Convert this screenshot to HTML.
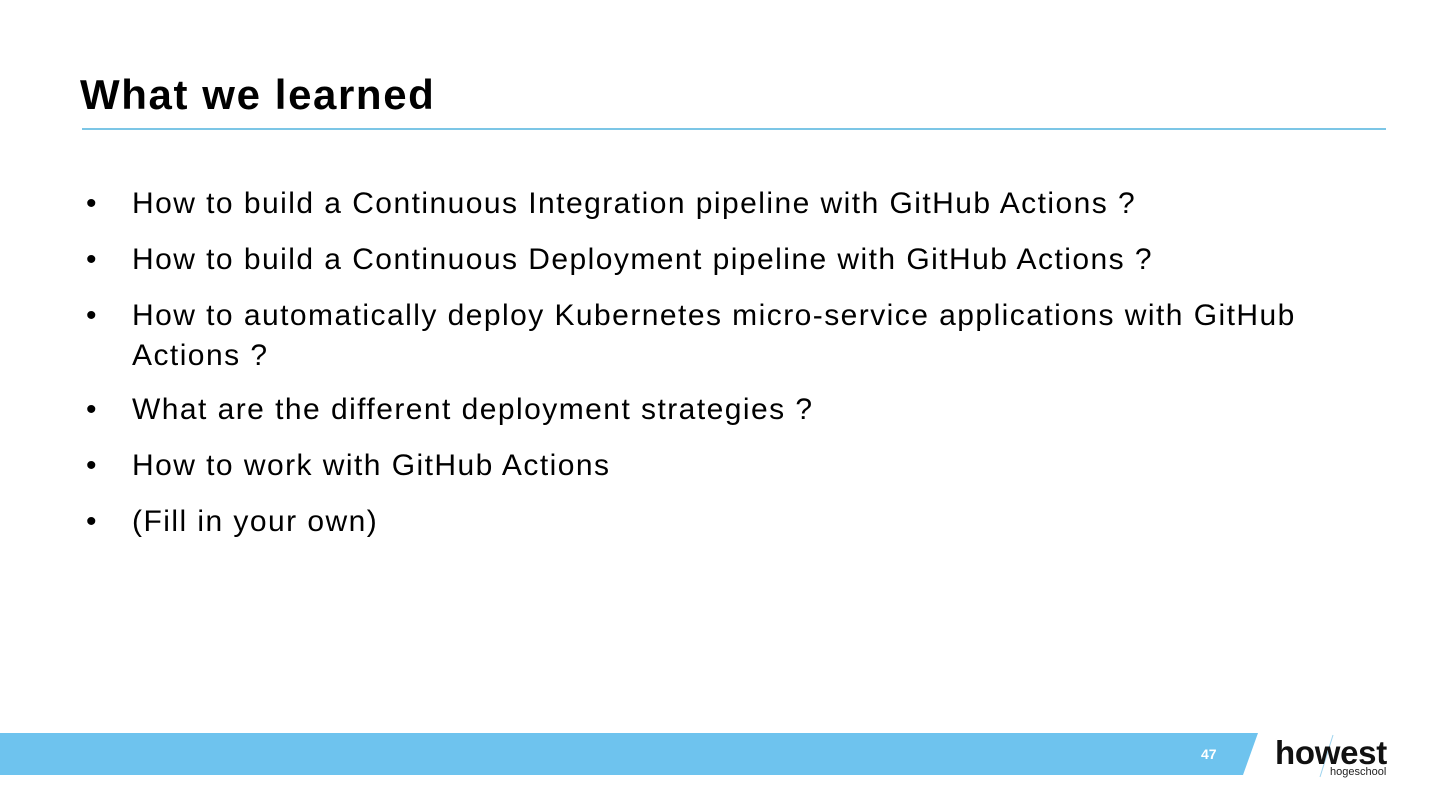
<!DOCTYPE html><html><head><style>
body{margin:0;width:1440px;height:810px;background:#fff;position:relative;overflow:hidden;font-family:"Liberation Sans",sans-serif;}
h1{position:absolute;left:80px;top:70px;margin:0;font-size:42px;font-weight:bold;color:#000;letter-spacing:1.6px;line-height:50px}
.rule{position:absolute;left:82px;top:128px;width:1304px;height:2px;background:#7cc6e6}
.b{position:absolute;left:132px;font-size:30px;color:#000;line-height:40px;width:1250px;letter-spacing:1.45px}
.b:before{content:"•";position:absolute;left:-46px;letter-spacing:0}
</style></head><body>
<h1>What we learned</h1>
<div class="rule"></div>
<div class="b" style="top:184px">How to build a Continuous Integration pipeline with GitHub Actions ?</div>
<div class="b" style="top:240px">How to build a Continuous Deployment pipeline with GitHub Actions ?</div>
<div class="b" style="top:296px">How to automatically deploy Kubernetes micro-service applications with GitHub<br>Actions ?</div>
<div class="b" style="top:390px">What are the different deployment strategies ?</div>
<div class="b" style="top:446px">How to work with GitHub Actions</div>
<div class="b" style="top:502px">(Fill in your own)</div>
<svg style="position:absolute;left:0;top:0" width="1440" height="810">
<polygon points="0,733 1258,733 1243,775 0,775" fill="#6ec3ee"/>
<text x="1201" y="759" font-family="Liberation Sans" font-weight="bold" font-size="14" fill="#fff">47</text>
<line x1="1333" y1="735" x2="1320" y2="777" stroke="#9dd3ee" stroke-width="1"/>
<text x="1275" y="764" font-family="Liberation Sans" font-weight="bold" font-size="33" fill="#111" letter-spacing="-0.3">howest</text>
<text x="1330" y="775" font-family="Liberation Sans" font-size="11" fill="#222">hogeschool</text>
</svg>
</body></html>
